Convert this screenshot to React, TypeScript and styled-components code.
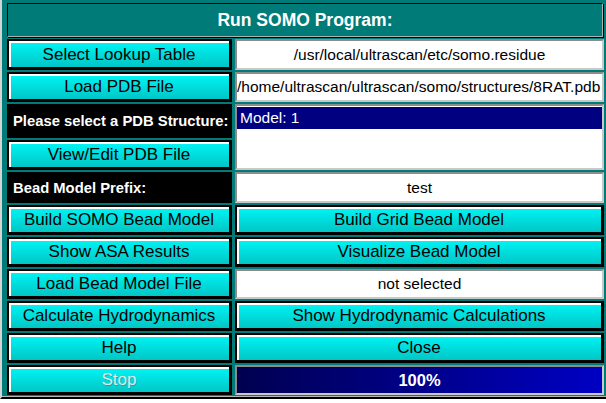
import React from "react";
import styled, { createGlobalStyle, css } from "styled-components";

const Global = createGlobalStyle`
  html, body { margin: 0; padding: 0; background: #ffffff; }
  body { font-family: "Liberation Sans", Arial, sans-serif; }
`;

const Frame = styled.div`
  width: 606px;
  height: 403px;
  box-sizing: border-box;
  background: #ffffff;
`;

const Window = styled.div`
  width: 606px;
  height: 399px;
  box-sizing: border-box;
  background: #007b78;
  border-left: 2px solid #d4d4d4;
  border-bottom: 2px solid #000;
  box-shadow: inset 0 -1px 0 #b8b8b8;
  padding: 3px 2px 2px 5px;
  display: grid;
  grid-template-columns: 225px 1fr;
  grid-template-rows: 34px 31px 30px 34px 30px 31px repeat(6, 30px);
  column-gap: 2px;
  row-gap: 2px;
`;

const Title = styled.div`
  grid-column: 1 / span 2;
  display: flex;
  align-items: center;
  justify-content: center;
  color: #fff;
  font-weight: bold;
  font-size: 17.5px;
  border: 1px solid;
  border-color: #000 #b0b0b0 #b0b0b0 #000;
  box-shadow: 1px 1px 0 #000;
  margin-right: 1px;
`;

const Button = styled.div<{ $disabled?: boolean }>`
  display: flex;
  align-items: center;
  justify-content: center;
  box-sizing: border-box;
  padding-top: 1px;
  border: 2px solid #000;
  border-right-width: 3px;
  border-bottom-width: 3px;
  background: linear-gradient(#00f6f6, #00c6c6);
  box-shadow: inset 2px 2px 0 #ffffff;
  color: #000;
  font-size: 17px;
  white-space: nowrap;
  ${(p) =>
    p.$disabled &&
    css`
      color: #e6e6e6;
      text-shadow: 1px 1px 0 rgba(0, 140, 140, 0.5);
    `}
`;

const Label = styled.div`
  display: flex;
  align-items: center;
  background: #000;
  color: #fff;
  font-weight: bold;
  font-size: 14.8px;
  padding-left: 6px;
  white-space: nowrap;
`;

const Field = styled.div<{ $left?: boolean }>`
  display: flex;
  align-items: center;
  justify-content: ${(p) => (p.$left ? "flex-start" : "center")};
  overflow: hidden;
  background: #fff;
  border: 2px solid;
  border-color: #8c8c8c #c8c8c8 #c8c8c8 #8c8c8c;
  margin-left: 1px;
  font-size: 15.5px;
  color: #000;
  white-space: nowrap;
`;

const List = styled.div`
  grid-row: span 2;
  background: #fff;
  border: 2px solid;
  border-color: #8c8c8c #c8c8c8 #c8c8c8 #8c8c8c;
  margin-left: 1px;
  padding-top: 1px;
`;

const ListItem = styled.div<{ $selected?: boolean }>`
  height: 22px;
  line-height: 22px;
  padding-left: 3px;
  font-size: 15.5px;
  color: ${(p) => (p.$selected ? "#fff" : "#000")};
  background: ${(p) => (p.$selected ? "#000080" : "transparent")};
`;

const Progress = styled.div`
  display: flex;
  align-items: center;
  justify-content: center;
  border: 2px solid;
  border-color: #8c8c8c #c8c8c8 #c8c8c8 #8c8c8c;
  margin-left: 1px;
  background: linear-gradient(to right, #000050, #0000c4);
  color: #fff;
  font-weight: bold;
  font-size: 16.5px;
`;

const RightButton = styled(Button)`
  margin-left: 1px;
`;

export default function App() {
  return (
    <Frame>
      <Global />
      <Window>
        <Title>Run SOMO Program:</Title>

        <Button>Select Lookup Table</Button>
        <Field>/usr/local/ultrascan/etc/somo.residue</Field>

        <Button>Load PDB File</Button>
        <Field $left>/home/ultrascan/ultrascan/somo/structures/8RAT.pdb</Field>

        <Label>Please select a PDB Structure:</Label>
        <List>
          <ListItem $selected>Model: 1</ListItem>
        </List>

        <Button>View/Edit PDB File</Button>

        <Label>Bead Model Prefix:</Label>
        <Field>test</Field>

        <Button>Build SOMO Bead Model</Button>
        <RightButton>Build Grid Bead Model</RightButton>

        <Button>Show ASA Results</Button>
        <RightButton>Visualize Bead Model</RightButton>

        <Button>Load Bead Model File</Button>
        <Field>not selected</Field>

        <Button>Calculate Hydrodynamics</Button>
        <RightButton>Show Hydrodynamic Calculations</RightButton>

        <Button>Help</Button>
        <RightButton>Close</RightButton>

        <Button $disabled>Stop</Button>
        <Progress>100%</Progress>
      </Window>
    </Frame>
  );
}
